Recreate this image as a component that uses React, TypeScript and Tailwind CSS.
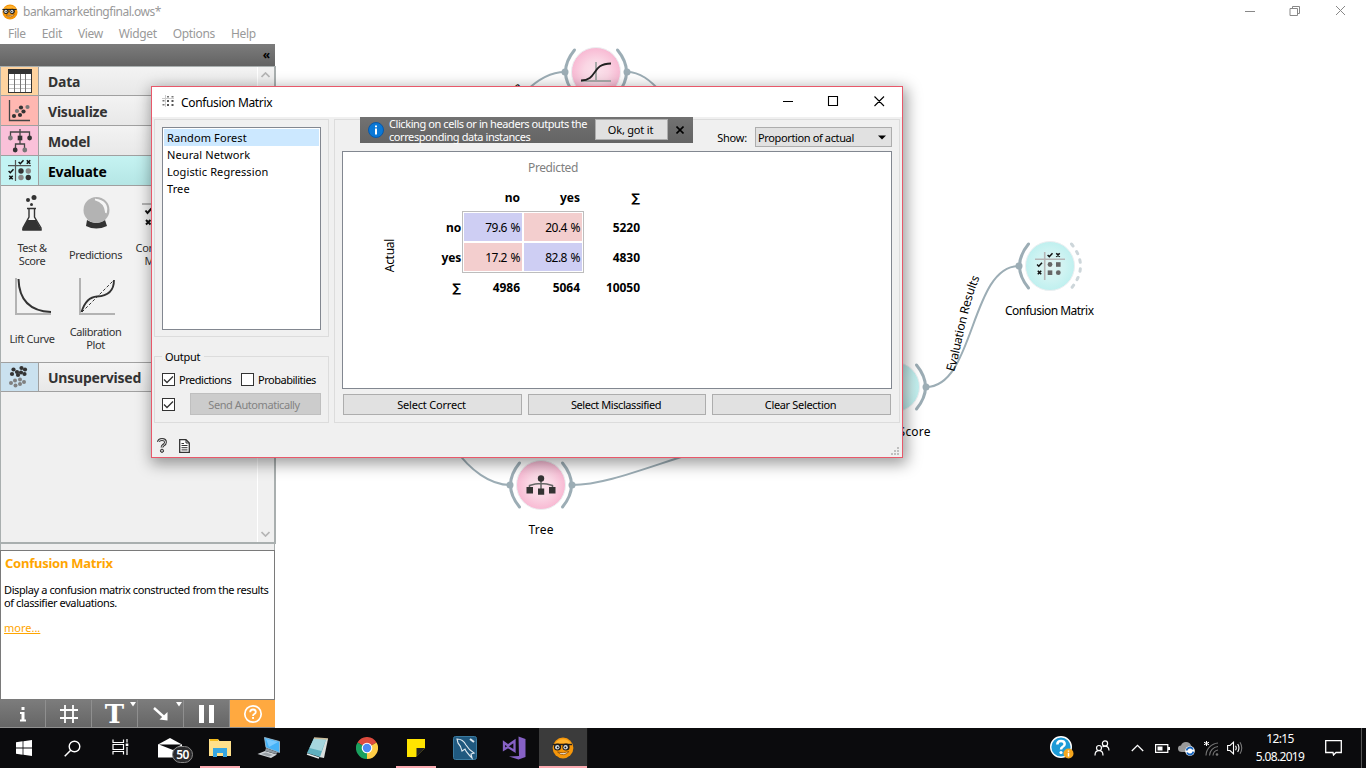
import React from "react";

const TAHOMA = "font-['Noto_Sans','DejaVu_Sans',sans-serif]";

/* ---------- shared drawings ---------- */

function Mascot({ size }: { size: number }) {
  return (
    <svg width={size} height={size} viewBox="0 0 22 22">
      <circle cx="11" cy="11" r="10.4" fill="#f5960a" />
      <path d="M2 8 A10 10 0 0 1 20 8 Q11 4 2 8" fill="#ffb22e" />
      <path d="M0.500 7.500 H20" stroke="#222" strokeWidth="1.4" />
      <circle cx="5.500" cy="10" r="3.600" fill="#1b1b1b" />
      <circle cx="14" cy="10" r="3.600" fill="#1b1b1b" />
      <circle cx="5.300" cy="10.200" r="2.200" fill="#d8dde0" />
      <circle cx="13.600" cy="10.200" r="2.200" fill="#d8dde0" />
      <circle cx="5.700" cy="10.400" r="0.900" fill="#111" />
      <circle cx="13.400" cy="10.400" r="0.900" fill="#111" />
      <path d="M5.500 15 Q11.500 20.500 17 14.500 Q11 17 5.500 15Z" fill="#fff" stroke="#8a4a00" strokeWidth="0.8" />
    </svg>
  );
}

function Tick({ x, y }: { x: number; y: number }) {
  return <path d={`M${x - 2.4} ${y} l1.7 1.7 l3.2 -3.5`} fill="none" stroke="#111" strokeWidth="1.5" />;
}
function Cross({ x, y }: { x: number; y: number }) {
  return <path d={`M${x - 1.7} ${y - 1.7} l3.4 3.4 m0 -3.4 l-3.4 3.4`} stroke="#111" strokeWidth="1.6" />;
}

/* ---------- sidebar ---------- */

function DataIcon() {
  return (
    <svg width="24" height="24" viewBox="0 0 24 24">
      <rect x="0.5" y="0.5" width="23" height="23" fill="#fff" stroke="#333" />
      <rect x="0" y="0" width="24" height="5" fill="#333" />
      <path d="M1 10.5H23M1 15.500H23M1 19.5H23" stroke="#c4c4c4" />
      <path d="M6.5 5V23M12.500 5V23M17.5 5V23" stroke="#777" />
    </svg>
  );
}
function VisualizeIcon() {
  return (
    <svg width="24" height="24" viewBox="0 0 24 24">
      <path d="M1.5 1V21.5H22" fill="none" stroke="#444" strokeWidth="1.3" />
      <g fill="#333">
        <circle cx="6" cy="17" r="2.1" /><circle cx="12" cy="16" r="2.1" /><circle cx="13" cy="8.5" r="2.1" /><circle cx="15.5" cy="12.5" r="2.1" />
      </g>
      <g fill="#777">
        <circle cx="9" cy="12" r="2.1" /><circle cx="19.5" cy="8" r="2.1" />
      </g>
    </svg>
  );
}
function ModelIcon() {
  return (
    <svg width="24" height="24" viewBox="0 0 24 24">
      <path d="M12 0V12M2.5 8V3H21.5V8M7.5 20V15H16.5V20M12 12V15" fill="none" stroke="#444" strokeWidth="1.3" />
      <rect x="9.7" y="6.7" width="4.6" height="4.6" fill="#333" />
      <circle cx="2.4" cy="9" r="2.4" fill="#777" />
      <circle cx="21.6" cy="9" r="2.4" fill="#333" />
      <circle cx="7.2" cy="21" r="2.4" fill="#333" />
      <circle cx="16.8" cy="21" r="2.4" fill="#777" />
    </svg>
  );
}
function EvaluateIcon() {
  return (
    <svg width="24" height="24" viewBox="0 0 24 24">
      <path d="M7.5 1V22M0 6.7H23" stroke="#555" strokeWidth="1.2" />
      <Tick x={13} y={3} />
      <Cross x={20.5} y={3} />
      <Tick x={3} y={12} />
      <Cross x={3} y={18.5} />
      <circle cx="13" cy="12" r="2.7" fill="#333" />
      <circle cx="20.3" cy="12" r="2.7" fill="#888" />
      <circle cx="13" cy="18.5" r="2.7" fill="#888" />
      <circle cx="20.3" cy="18.5" r="2.7" fill="#333" />
    </svg>
  );
}
function UnsupervisedIcon() {
  return (
    <svg width="24" height="24" viewBox="0 0 24 24">
      <g fill="#333">
        {[[4, 9], [5.5, 4.5], [9, 7], [13.5, 3], [13, 7.5], [17, 4.5], [16.5, 9], [10, 10]].map(([x, y]) => (
          <circle key={`${x}-${y}`} cx={x} cy={y} r="2.1" />
        ))}
      </g>
      <g fill="#808080">
        {[[3, 18], [7, 15.5], [12, 14.5], [16, 17], [7.5, 20.5], [12, 19]].map(([x, y]) => (
          <circle key={`${x}-${y}`} cx={x} cy={y} r="2" />
        ))}
      </g>
    </svg>
  );
}

function Category({ label, tile, icon, active = false, short = false }: { label: string; tile: string; icon: React.ReactNode; active?: boolean; short?: boolean }) {
  return (
    <div className={`flex ${short ? "h-[29px]" : "h-[30px]"} shrink-0 border-b border-[#a0a0a0] ${active ? "bg-linear-to-b from-[#c5f3f2] to-[#b5e6e5]" : "bg-linear-to-b from-[#f3f3f3] to-[#e8e8e8]"}`}>
      <div className={`flex w-[38px] items-center justify-center border-r border-[#a0a0a0] ${tile}`}>{icon}</div>
      <div className={`pl-[9px] text-[14px] tracking-[-0.22px] ${short ? "leading-[30px]" : "leading-[32px]"} font-bold ${active ? "text-black" : "text-[#333]"}`}>{label}</div>
    </div>
  );
}

function Tool({ icon, children }: { icon: React.ReactNode; children: React.ReactNode }) {
  return (
    <div className="flex h-[84px] flex-col items-center pt-2">
      <div className="h-10">{icon}</div>
      <div className="mt-[5px] flex h-7 items-center pt-[2px] text-center text-[11px] leading-[13px] tracking-[-0.42px] whitespace-nowrap text-[#333]">
        <div>{children}</div>
      </div>
    </div>
  );
}

function BarButton({ children, menu = false }: { children: React.ReactNode; menu?: boolean }) {
  return (
    <div className="relative flex w-[46px] items-center justify-center border-r border-[#8f8f8f] bg-linear-to-b from-[#7c7c7c] to-[#666]">
      {children}
      {menu && (
        <svg className="absolute top-[2px] right-[1px]" width="6" height="5" viewBox="0 0 6 5"><path d="M0 0H6L3 4.6Z" fill="#fff" /></svg>
      )}
    </div>
  );
}

function Sidebar() {
  return (
    <div className="flex w-[276px] shrink-0 flex-col">
      <div className="flex h-[22px] w-[275px] items-center justify-end bg-linear-to-b from-[#7c7c7c] to-[#636363] pr-[5px] text-[12px] leading-none font-bold text-black">
        «
      </div>
      <div className="flex h-[478px] w-[276px] border-t border-r-2 border-b-2 border-l border-[#a9afaf] bg-[#f0f0f0]">
        <div className="flex w-[256px] flex-col">
          <Category label="Data" tile="bg-[#ffd39f]" icon={<DataIcon />} short />
          <Category label="Visualize" tile="bg-[#ffb7b1]" icon={<VisualizeIcon />} />
          <Category label="Model" tile="bg-[#fac1d9]" icon={<ModelIcon />} />
          <Category label="Evaluate" tile="bg-[#c3f3f3]" icon={<EvaluateIcon />} active />
          <div className="grid h-[177px] shrink-0 grid-cols-[62px_65px_64px_64px] content-start overflow-hidden border-b border-[#a0a0a0] bg-[#f2f2f2]">
            <Tool
              icon={
                <svg width="36" height="38" viewBox="0 0 36 38">
                  <circle cx="20" cy="3.5" r="2.5" fill="#333" /><circle cx="14" cy="6" r="2" fill="#333" /><circle cx="17.5" cy="10.5" r="1.5" fill="#333" />
                  <path d="M13 14.5H22M15 15V23L9 34V36H27V34L20.5 23V15" fill="none" stroke="#333" strokeWidth="1.4" />
                  <path d="M13.5 26H22L27.5 36H8Z" fill="#333" />
                </svg>
              }
            >
              Test &amp;<br />Score
            </Tool>
            <Tool
              icon={
                <svg width="36" height="38" viewBox="0 0 36 38">
                  <path d="M9 26Q18 32 27 26L29 32Q18 37 8 32Z" fill="#333" />
                  <circle cx="18.500" cy="16" r="13" fill="#b3b3b3" />
                  <path d="M17 5.5Q27 8 28 19Q31 7 17 5.5Z" fill="#f5f5f5" stroke="#f5f5f5" strokeWidth="1.4" />
                </svg>
              }
            >
              Predictions
            </Tool>
            <Tool
              icon={
                <svg width="36" height="38" viewBox="0 0 36 38">
                  <path d="M0 10H36" stroke="#b3b3b3" strokeWidth="2" />
                  <path d="M3.5 16.5l2 2.5 4-4.5M4 26l4.5 4.5m0-4.5l-4.5 4.5" fill="none" stroke="#111" strokeWidth="2" />
                </svg>
              }
            >
              Confusion<br />Matrix
            </Tool>
            <div />
            <Tool
              icon={
                <svg width="38" height="38" viewBox="0 0 38 38">
                  <path d="M3 0V36H38" fill="none" stroke="#b3b3b3" strokeWidth="2" />
                  <path d="M5.500 1C6 20 15 33 38 34" fill="none" stroke="#333" strokeWidth="2" />
                </svg>
              }
            >
              Lift Curve
            </Tool>
            <Tool
              icon={
                <svg width="38" height="38" viewBox="0 0 38 38">
                  <path d="M3 0V36H38" fill="none" stroke="#b3b3b3" strokeWidth="2" />
                  <path d="M5 34L37 2" stroke="#333" strokeWidth="1" strokeDasharray="3 2" />
                  <path d="M4.500 34C7 26 11 19 20 18.500C30 18 37 13 37 2" fill="none" stroke="#333" strokeWidth="1.8" />
                </svg>
              }
            >
              Calibration<br />Plot
            </Tool>
          </div>
          <Category label="Unsupervised" tile="bg-[#cae1ef]" icon={<UnsupervisedIcon />} short />
        </div>
        <div className="flex w-[17px] flex-col justify-between border-l border-white py-[5px] pl-[3px]">
          <svg width="9" height="6" viewBox="0 0 9 6"><path d="M0.5 5L4.5 1L8.5 5" fill="none" stroke="#b5b5b5" strokeWidth="1.7" /></svg>
          <svg width="9" height="6" viewBox="0 0 9 6"><path d="M0.5 1L4.5 5L8.5 1" fill="none" stroke="#b5b5b5" strokeWidth="1.7" /></svg>
        </div>
      </div>
      <div className="h-[6px] w-[275px] border-r border-l border-[#a9afaf] bg-[#f0f0f0]" />
      <div className="h-[150px] w-[275px] border border-[#7a7a7a] bg-white pl-[3px]">
        <div className="mt-[3px] pl-px text-[13px] leading-[18px] font-bold tracking-[-0.25px] text-[#ffa500]">Confusion Matrix</div>
        <div className="mt-[11px] text-[11px] leading-[13px] tracking-[-0.4px] whitespace-nowrap text-black">
          Display a confusion matrix constructed from the results
          <br />
          of classifier evaluations.
        </div>
        <div className="mt-[12px] text-[11px] leading-[13px] text-[#ffa500] underline">more...</div>
      </div>
      <div className="flex h-[28px] w-[275px] border-b border-[#8f8f8f]">
        <BarButton>
          <svg width="8" height="16" viewBox="0 0 8 16"><path d="M1 6H5.5V13.5H7V15.5H1V13.5H2.5V8H1ZM2.5 1H5.5V4H2.5Z" fill="#fff" /></svg>
        </BarButton>
        <BarButton>
          <svg width="20" height="20" viewBox="0 0 20 20"><path d="M6 1V19M14 1V19M1 6H19M1 14H19" stroke="#fff" strokeWidth="1.8" /></svg>
        </BarButton>
        <BarButton menu>
          <span className="font-['DejaVu_Serif',serif] text-[26px] leading-none font-bold text-white">T</span>
        </BarButton>
        <BarButton menu>
          <svg width="16" height="16" viewBox="0 0 16 16"><path d="M1 2L10.5 10.5" stroke="#fff" strokeWidth="2.4" /><path d="M14.500 14.500V6L6.500 13.500Z" fill="#fff" /></svg>
        </BarButton>
        <BarButton>
          <svg width="16" height="18" viewBox="0 0 16 18"><path d="M0 0H5V18H0ZM10 0H15V18H10Z" fill="#fff" /></svg>
        </BarButton>
        <div className="flex flex-1 items-center justify-center bg-[#ffa940]">
          <svg width="20" height="20" viewBox="0 0 20 20">
            <circle cx="10" cy="10" r="8.2" fill="none" stroke="#fff" strokeWidth="1.7" />
            <path d="M7.200 8.200Q7.200 5.500 10 5.500Q12.800 5.500 12.800 8Q12.800 9.300 11 10.200Q10 10.800 10 12" fill="none" stroke="#fff" strokeWidth="1.8" />
            <rect x="9.100" y="13" width="1.900" height="1.900" fill="#fff" />
          </svg>
        </div>
      </div>
    </div>
  );
}

/* ---------- workflow canvas ---------- */

function Workflow() {
  const line = "#9cadb5";
  return (
    <svg width="1090" height="684" viewBox="276 44 1090 684">
      <defs>
        <radialGradient id="pink"><stop offset="0" stopColor="#fbe3ec" /><stop offset="0.5" stopColor="#fad6e4" /><stop offset="1" stopColor="#f8b9d3" /></radialGradient>
        <radialGradient id="aqua"><stop offset="0" stopColor="#e3f3f2" /><stop offset="0.6" stopColor="#cff3f2" /><stop offset="1" stopColor="#bff0ef" /></radialGradient>
        <path id="channel" d="M954 372C963 345 966 305 983 270" />
      </defs>
      <g fill="none" stroke={line} strokeWidth="2">
        <path d="M926 387C975 387 970 266 1019 266" />
        <path d="M572 485C605 485 645 468 700 451" />
        <path d="M455 449C470 470 490 485 510 485" />
        <path d="M525 92C538 79 551 72 565 72" />
        <path d="M627 72C640 72 650 80 661 92" />
      </g>
      <g fill="none" stroke={line} strokeWidth="3" strokeLinecap="round">
        <path d="M519.500 463Q501.500 485 519.500 507" />
        <path d="M562.500 463Q580.500 485 562.500 507" />
        <path d="M574.500 50Q556.500 72 574.500 94" />
        <path d="M617.500 50Q635.500 72 617.500 94" />
        <path d="M1028.500 244Q1010.500 266 1028.500 288" />
        <path d="M916.500 365Q934.500 387 916.500 409" />
        <path d="M1071.500 244Q1089.500 266 1071.500 288" stroke="#cdd6da" strokeDasharray="2.500 6.500" />
      </g>
      <g fill={line}>
        {[[510, 485], [572, 485], [565, 72], [627, 72], [1019, 266], [926, 387]].map(([x, y]) => (
          <circle key={`${x}-${y}`} cx={x} cy={y} r="3.500" />
        ))}
      </g>
      <g stroke="#eceff1" strokeWidth="1">
        <circle cx="541" cy="485" r="24.500" fill="url(#pink)" />
        <circle cx="596" cy="72" r="24.500" fill="url(#pink)" />
        <circle cx="1050" cy="266" r="24.500" fill="url(#aqua)" />
        <circle cx="895" cy="387" r="24.500" fill="url(#aqua)" />
      </g>
      {/* tree glyph */}
      <path d="M541 479V489M529.500 489V485.500Q541 481.500 552.500 485.500V489" fill="none" stroke="#666" strokeWidth="1.500" />
      <circle cx="541" cy="478.500" r="3.200" fill="#333" />
      <path d="M526.500 487h6.500v6.500h-6.500zM538 488.500h6.200v6.200h-6.200zM549 487h6.500v6.500h-6.500z" fill="#333" />
      {/* logistic glyph */}
      <path d="M596 62V82M581 81H611" stroke="#aaa" strokeWidth="2" />
      <path d="M581 80.500C598 80.500 591 63.500 611 63.500" fill="none" stroke="#222" strokeWidth="1.800" />
      {/* confusion matrix glyph */}
      <path d="M1044.700 252V280M1035 259.200H1065" stroke="#b5b5b5" strokeWidth="1.600" />
      <Tick x={1050} y={255} />
      <Cross x={1058} y={255} />
      <Tick x={1039.500} y={264.500} />
      <Cross x={1039.500} y={272.500} />
      <g fill="#666">
        <circle cx="1050" cy="264.500" r="2.400" /><rect x="1056" y="262.200" width="4.600" height="4.600" />
        <rect x="1047.700" y="270.400" width="4.600" height="4.600" /><circle cx="1058.300" cy="272.700" r="2.400" />
      </g>
      <g fontSize="12" fill="#000" textAnchor="middle" className={TAHOMA}>
        <text x="1049.500" y="315" textLength="89">Confusion Matrix</text>
        <text x="895" y="436" textLength="71">Test &amp; Score</text>
        <text x="541" y="534" textLength="25">Tree</text>
      </g>
      <text fontSize="12" className={TAHOMA}><textPath href="#channel" textLength="98">Evaluation Results</textPath></text>
      <text fontSize="12" className={TAHOMA} transform="rotate(-38 517 90)" x="516" y="92">a</text>
      <path d="M276 43.500H1366" stroke="#ededed" />
    </svg>
  );
}

/* ---------- confusion matrix dialog ---------- */

function CheckBox({ checked = false }: { checked?: boolean }) {
  return (
    <span className="flex size-[13px] shrink-0 items-center justify-center border border-[#333] bg-white">
      {checked && (
        <svg width="11" height="11" viewBox="0 0 11 11"><path d="M1 5.500L4 8.500L10 2.500" fill="none" stroke="#333" strokeWidth="1.300" /></svg>
      )}
    </span>
  );
}

function PushButton({ children, className = "" }: { children: React.ReactNode; className?: string }) {
  return <div className={`flex h-[21px] items-center justify-center border border-[#adadad] bg-[#e1e1e1] pt-[2px] ${className}`}>{children}</div>;
}

const head = "pr-[3px] text-right font-bold leading-[29px]";
const total = "pr-[3px] text-right font-bold leading-[31px] tracking-[-0.05px]";
const rowHead = "pr-[2px] text-right font-bold leading-[31px] tracking-[-0.2px]";
const cell = "m-px h-[28px] pr-[2px] text-right leading-[29px] tracking-[-0.52px] [word-spacing:1px]";

function Dialog() {
  return (
    <div className="absolute top-[86px] left-[151px] flex h-[372px] w-[752px] flex-col border border-[#e8586a] bg-[#f0f0f0] text-[11px] text-black shadow-[2px_4px_14px_2px_rgba(0,0,0,0.38)]">
      <div className="flex h-[30px] items-center bg-white pl-[10px]">
        <svg className="-mt-[3px]" width="12" height="12" viewBox="0 0 12 12">
          <path d="M0 3.500H12M3.500 0V12" stroke="#ccc" />
          <path d="M5 1h2v1.500H5zM9.500 1h2v1.500h-2zM0.500 5h2v1.500h-2zM0.500 9h2v1.500h-2z" fill="#777" />
          <path d="M5 5h2v2H5zM9.500 5h2v2h-2zM5 9h2v2H5zM9.500 9h2v2h-2z" fill="#555" />
        </svg>
        <span className="ml-[7px] pt-px text-[12px] tracking-[-0.35px]">Confusion Matrix</span>
        <svg className="mr-[17px] ml-auto" width="102" height="12" viewBox="0 0 102 12">
          <path d="M0 5.500H10M45.500 0.500H54.500V9.500H45.500ZM91.500 0.500L101 10M101 0.500L91.500 10" fill="none" stroke="#000" strokeWidth="1.100" />
        </svg>
      </div>

      <div className="flex px-[2px] pt-[2px]">
        <div className="flex w-[175px] flex-col">
          <div className="h-[218px] border border-[#dcdcdc] p-[7px]">
            <div className="h-[203px] border border-[#828790] bg-white p-px leading-[17px] tracking-[0.1px]">
              <div className="bg-[#cce8ff] pl-[3px]">Random Forest</div>
              <div className="pl-[3px]">Neural Network</div>
              <div className="pl-[3px]">Logistic Regression</div>
              <div className="pl-[3px]">Tree</div>
            </div>
          </div>
          <div className="relative mt-[19px] h-[67px] border border-[#dcdcdc] px-[7px] pt-[16px]">
            <span className="absolute -top-[8px] left-[7px] bg-[#f0f0f0] pr-[4px] pl-[3px] leading-[16px] tracking-[-0.3px]">Output</span>
            <div className="flex h-[13px] items-center tracking-[-0.48px]">
              <CheckBox checked />
              <span className="ml-[4px] w-[62px] pt-[2px] whitespace-nowrap">Predictions</span>
              <CheckBox />
              <span className="ml-[4px] pt-[2px] whitespace-nowrap">Probabilities</span>
            </div>
            <div className="mt-[7px] flex items-center">
              <CheckBox checked />
              <div className="ml-[15px] flex h-[22px] w-[131px] items-center justify-center border border-[#bfbfbf] bg-[#ccc] pt-[2px] pr-[3px] tracking-[-0.43px] text-[#838383]">Send Automatically</div>
            </div>
          </div>
        </div>

        <div className="relative ml-[5px] h-[304px] w-[566px] border border-[#dcdcdc] px-[7px] pt-[7px]">
          <div className="flex h-[20px] items-center justify-end">
            <span className="mr-[8px] pt-[2px] tracking-[-0.2px]">Show:</span>
            <div className="flex h-[20px] w-[137px] items-center border border-[#adadad] bg-[#e1e1e1] pt-[2px] pl-[2px] tracking-[-0.37px]">
              Proportion of actual
              <svg className="mr-[5px] mb-[2px] ml-auto" width="8" height="5" viewBox="0 0 8 5"><path d="M0 0.500H8L4 4.500Z" fill="#000" /></svg>
            </div>
          </div>
          <div className="mt-[4px] flex h-[238px] border border-[#828790] bg-white text-[12px]">
            <div className="flex w-[60px] items-center justify-end pb-[28px]">
              <span className="rotate-180 pl-[5px] leading-[16px] tracking-[-0.3px] [writing-mode:vertical-rl]">Actual</span>
            </div>
            <div>
              <div className="flex h-[31px] items-center pt-px pl-[60px]">
                <div className="w-[180px] text-center tracking-[-0.4px] text-[#808080]">Predicted</div>
              </div>
              <div className="relative grid grid-cols-[60px_60px_60px_60px] grid-rows-[29px_30px_30px_30px]">
                <div className="absolute top-[28px] left-[59px] h-[62px] w-[122px] border border-[#bdbdbd]" />
                <div /><div className={head}>no</div><div className={head}>yes</div><div className={head}>∑</div>
                <div className={rowHead}>no</div>
                <div className={`bg-[#cecef3] ${cell}`}>79.6 %</div>
                <div className={`bg-[#f3cece] ${cell}`}>20.4 %</div>
                <div className={total}>5220</div>
                <div className={rowHead}>yes</div>
                <div className={`bg-[#f3cece] ${cell}`}>17.2 %</div>
                <div className={`bg-[#cecef3] ${cell}`}>82.8 %</div>
                <div className={total}>4830</div>
                <div className={rowHead}>∑</div><div className={total}>4986</div><div className={total}>5064</div><div className={total}>10050</div>
              </div>
            </div>
          </div>
          <div className="mt-[5px] flex gap-[6px] pr-px pl-px">
            <PushButton className="w-[179px] pr-[2px] tracking-[-0.2px]">Select Correct</PushButton>
            <PushButton className="w-[178px] pr-[2px] tracking-[-0.43px]">Select Misclassified</PushButton>
            <PushButton className="w-[179px] pr-[2px] tracking-[-0.33px]">Clear Selection</PushButton>
          </div>
          <div className="absolute -top-[3px] left-[25px] flex h-[26px] w-[333px] items-center bg-linear-to-b from-[#727272] to-[#646464] pl-[8px] text-white">
            <svg width="16" height="16" viewBox="0 0 16 16">
              <circle cx="8" cy="8" r="7.500" fill="#0a78d6" stroke="#0a58a8" />
              <path d="M7 3.500H9V5.300H7ZM7 6.500H9V12.500H7Z" fill="#fff" />
            </svg>
            <div className="ml-[5px] w-[206px] leading-[13px] tracking-[-0.42px] whitespace-nowrap">Clicking on cells or in headers outputs the<br />corresponding data instances</div>
            <PushButton className="mb-px w-[73px] pr-[2px] tracking-[-0.2px] text-black">Ok, got it</PushButton>
            <svg className="ml-[8px]" width="8" height="8" viewBox="0 0 8 8"><path d="M0.500 0.500L7.500 7.500M7.500 0.500L0.500 7.500" stroke="#000" strokeWidth="1.600" /></svg>
          </div>
        </div>
      </div>

      <div className="mt-auto flex h-[34px] items-center pt-[13px] pb-[2px] pl-[5px]">
        <svg width="10" height="15" viewBox="0 0 10 15">
          <path d="M1.500 4Q1.500 1.500 5 1.500Q8.500 1.500 8.500 4.200Q8.500 6 6.500 7Q5 8 5 9.500" fill="none" stroke="#333" strokeWidth="2.800" />
          <path d="M1.500 4Q1.500 1.500 5 1.500Q8.500 1.500 8.500 4.200Q8.500 6 6.500 7Q5 8 5 9.500" fill="none" stroke="#eee" strokeWidth="1" />
          <circle cx="5" cy="12.800" r="1.600" fill="#bbb" stroke="#333" />
        </svg>
        <svg className="ml-[12px]" width="11" height="14" viewBox="0 0 11 14">
          <path d="M0.700 0.700H7L10.300 4V13.300H0.700Z" fill="#fff" stroke="#333" strokeWidth="1.300" />
          <path d="M7 1V4H10M2.500 4.500H5M2.500 6.500H8.500M2.500 8.700H8.500M2.500 10.900H8.500" fill="none" stroke="#333" />
        </svg>
        <svg className="mt-[10px] mr-[3px] ml-auto" width="8" height="8" viewBox="0 0 8 8">
          <path d="M6 0h2v2h-2zM3 3h2v2h-2zM6 3h2v2h-2zM0 6h2v2h-2zM3 6h2v2h-2zM6 6h2v2h-2z" fill="#bfbfbf" />
        </svg>
      </div>
    </div>
  );
}

/* ---------- taskbar ---------- */

function Slot({ children, running = false, active = false }: { children: React.ReactNode; running?: boolean; active?: boolean }) {
  return (
    <div className={`flex w-[49px] flex-col items-center ${active ? "ml-px border-r border-[#111] bg-[#3b3b3b]" : ""}`}>
      <div className="flex h-[38px] items-center pt-[2px]">{children}</div>
      {running && <div className={`h-[2px] bg-[#fbaab0] ${active ? "w-full" : "w-10"}`} />}
    </div>
  );
}

function Taskbar() {
  return (
    <div className="flex h-10 bg-[#0b0b0d] text-white">
      <div className="flex w-12 items-center justify-center">
        <svg width="16" height="16" viewBox="0 0 16 16"><path d="M0 2.200L6.600 1.300V7.600H0ZM7.400 1.200L16 0V7.600H7.400ZM0 8.400H6.600V14.700L0 13.800ZM7.400 8.400H16V16L7.400 14.800Z" fill="#fff" /></svg>
      </div>
      <div className="flex w-12 items-center justify-center">
        <svg width="17" height="17" viewBox="0 0 17 17"><circle cx="10.500" cy="6.500" r="5.300" fill="none" stroke="#fff" strokeWidth="1.400" /><path d="M6.700 10.300L0.700 16.300" stroke="#fff" strokeWidth="1.500" /></svg>
      </div>
      <div className="flex w-[50px] items-center justify-center pr-[2px] pb-[2px]">
        <svg width="17" height="16" viewBox="0 0 17 16">
          <path d="M1 0.500V3.500H11.500V0.500M1 15.500V12.500H11.500V15.500M1 5.500H11.500V10.500H1ZM15 0V3.500M15 8V16" fill="none" stroke="#fff" strokeWidth="1.200" />
          <rect x="13.700" y="4.500" width="2.600" height="2.600" fill="#fff" />
        </svg>
      </div>
      <Slot>
        <div className="relative">
          <svg width="25" height="20" viewBox="0 0 25 20"><path d="M0 6.500L12 0L24 6.500V19.500H0Z" fill="#fff" /><path d="M1 6.500H23.500L15 12Z" fill="#0b0b0d" /></svg>
          <span className="absolute top-[8px] left-[14px] flex h-[17px] w-[21px] items-center justify-center rounded-full border border-[#888] bg-[#2b2b2d] text-[12px] leading-none font-semibold tracking-[-0.5px]">50</span>
        </div>
      </Slot>
      <Slot running>
        <svg width="22" height="20" viewBox="0 0 22 20">
          <path d="M0 1H9L10.500 3H22V18H0Z" fill="#ffe08a" /><path d="M1 1H9V3H1Z" fill="#f3bb1c" />
          <path d="M4 10H18V19H14V15H8V19H4Z" fill="#37a7e2" />
        </svg>
      </Slot>
      <Slot>
        <svg width="24" height="22" viewBox="0 0 24 22">
          <path d="M7.500 0.500L22.500 4.500V15.500L9 10.500Z" fill="#45b2f7" stroke="#a9cbe0" strokeWidth="0.800" /><path d="M9 2L21 5L12 10Z" fill="#78caff" />
          <path d="M0.500 17L8 14L20 17.500L14 21Z" fill="#cfd4d8" /><path d="M9 11L21 15.500L19 17L8 14Z" fill="#8e979e" />
          <path d="M4 17L9 15.500L16 18L12 19.500Z" fill="#9aa1a6" />
        </svg>
      </Slot>
      <Slot>
        <svg width="24" height="22" viewBox="0 0 24 22">
          <path d="M8 1L22 2L18 21L13 20Z" fill="#d9dfdd" /><path d="M8 1L20 2.500L14 20L1 16Z" fill="#5fb0bf" /><path d="M8 1L20 2.500L15.500 14L3.500 11Z" fill="#a6d6de" />
          <path d="M8 1L22 2" stroke="#cbbd9c" strokeWidth="1.500" /><path d="M1 17L13 21" stroke="#e8eeee" strokeWidth="1.500" />
        </svg>
      </Slot>
      <Slot>
        <svg width="22" height="22" viewBox="0 0 22 22">
          <path d="M11 11L1.470 5.500A11 11 0 0 1 20.530 5.500Z" fill="#dd4b3e" />
          <path d="M11 11L20.530 5.500A11 11 0 0 1 11 22Z" fill="#ffcd46" />
          <path d="M11 11L11 22A11 11 0 0 1 1.470 5.500Z" fill="#1aa15f" />
          <circle cx="11" cy="11" r="5.300" fill="#fff" /><circle cx="11" cy="11" r="4.200" fill="#4a8af4" />
        </svg>
      </Slot>
      <Slot running>
        <svg width="18" height="18" viewBox="0 0 18 18"><path d="M0 0H18V9L9 18H0Z" fill="#ffe400" /><path d="M9.500 18V9H18Z" fill="#222" /></svg>
      </Slot>
      <Slot>
        <svg width="24" height="24" viewBox="0 0 24 24">
          <rect x="0.500" y="0.500" width="23" height="23" rx="2" fill="#20597f" stroke="#3b7ba0" />
          <path d="M4 3Q10 3 13 9Q16 14 21 17L18 18L19 22Q13 16 12 13L9 15Q8 10 5 7Z" fill="none" stroke="#dfe9f0" strokeWidth="1.100" />
          <path d="M17 3L21 6" stroke="#dfe9f0" strokeWidth="2" />
        </svg>
      </Slot>
      <Slot>
        <svg width="24" height="24" viewBox="0 0 24 24">
          <path d="M16.500 0.500L23.500 3V21L16.500 23.500L7 20.500L17 20Z" fill="#8661c5" />
          <path d="M2 6.500V13.500L6 11L12.500 15V5L6 9.500Z" fill="none" stroke="#8661c5" strokeWidth="2.300" />
        </svg>
      </Slot>
      <Slot running active><Mascot size={22} /></Slot>

      <div className="ml-auto flex items-center">
        <svg width="24" height="24" viewBox="0 0 24 24">
          <circle cx="11" cy="11" r="10.300" fill="#1c9ad6" stroke="#fff" strokeWidth="1.400" />
          <path d="M7.300 8.500Q7.300 5 11 5Q14.700 5 14.700 8Q14.700 9.800 12.500 11Q11 12 11 13.500" fill="none" stroke="#fff" strokeWidth="2.500" />
          <circle cx="11" cy="16.500" r="1.600" fill="#fff" />
          <circle cx="18.500" cy="17.500" r="5" fill="#f5a61d" /><path d="M18.500 14.500V15.800M18.500 16.800V20.500" stroke="#fff" strokeWidth="1.500" />
        </svg>
        <svg className="ml-[20px]" width="16" height="16" viewBox="0 0 16 16">
          <circle cx="11" cy="3.500" r="2.600" fill="none" stroke="#fff" strokeWidth="1.200" /><circle cx="5" cy="8" r="2.500" fill="none" stroke="#fff" strokeWidth="1.200" />
          <path d="M1 15.500Q1 10.700 5 10.700Q9 10.700 9 15.500M8.500 7.200Q9.500 6.200 11 6.200Q14.800 6.200 15 10.500" fill="none" stroke="#fff" strokeWidth="1.200" />
        </svg>
        <svg className="ml-[21px]" width="13" height="8" viewBox="0 0 13 8"><path d="M0.800 7L6.500 1.300L12.200 7" fill="none" stroke="#fff" strokeWidth="1.300" /></svg>
        <svg className="ml-[11px]" width="15" height="9" viewBox="0 0 15 9"><path d="M0.600 0.600H12.800V8.400H0.600Z" fill="none" stroke="#fff" strokeWidth="1.200" /><path d="M2.500 2.500H7.500V6.500H2.500ZM13 3H15V6H13Z" fill="#fff" /></svg>
        <svg className="ml-[8px]" width="18" height="15" viewBox="0 0 18 15">
          <path d="M4 11Q0 11 0 7.500Q0 4.500 3 4.500Q4 1 8 1Q12 1 13 4.500Q15 5 15 8L9 11Z" fill="#999" />
          <circle cx="12" cy="10" r="4.800" fill="#fff" /><path d="M8.700 9.500A3.300 3.300 0 0 1 15 8.500M15.300 10.700A3.300 3.300 0 0 1 9 11.500" fill="none" stroke="#1565c0" strokeWidth="1.800" />
        </svg>
        <svg className="ml-[7px]" width="17" height="16" viewBox="0 0 17 16">
          <path d="M3.500 1V6M1 2.200L6 4.800M6 2.200L1 4.800" stroke="#fff" />
          <path d="M3 15.500A13 13 0 0 1 15 3M6.500 15.500A9.500 9.500 0 0 1 15 6.500M10 15.500A6 6 0 0 1 15 10" fill="none" stroke="#777" strokeWidth="1.100" />
          <circle cx="14" cy="14.500" r="1.300" fill="#777" />
        </svg>
        <svg className="ml-[7px]" width="17" height="14" viewBox="0 0 17 14">
          <path d="M0.600 4.500H3L6.500 1.200V12.800L3 9.500H0.600ZM8.500 4.800Q10 7 8.500 9.200M10.700 3Q13.200 7 10.700 11" fill="none" stroke="#fff" strokeWidth="1.100" />
          <path d="M13 1.200Q16.500 7 13 12.800" fill="none" stroke="#777" strokeWidth="1.100" />
        </svg>
        <div className="ml-[11px] w-[50px] pb-px text-center text-[12px] leading-[18px] tracking-[-0.65px] whitespace-nowrap">12:15<br />5.08.2019</div>
        <svg className="ml-[20px]" width="17" height="16" viewBox="0 0 17 16"><path d="M0.700 0.700H16.300V12.500H11L8.500 15L8 12.500H0.700Z" fill="none" stroke="#fff" strokeWidth="1.300" /></svg>
        <div className="ml-[19px] h-10 w-px bg-[#555]" />
        <div className="w-[4px]" />
      </div>
    </div>
  );
}

export default function App() {
  return (
    <div className={`relative flex h-[768px] w-[1366px] flex-col overflow-hidden bg-white ${TAHOMA}`}>
      <div className="flex h-[23px] items-center pl-[2px] text-[12px] text-[#999]">
        <Mascot size={16} />
        <span className="ml-[5px] tracking-[-0.48px]">bankamarketingfinal.ows*</span>
        <svg className="mr-[20px] mb-[2px] ml-auto" width="101" height="12" viewBox="0 0 101 12">
          <path d="M0 6.500H10M47.500 3V1.500H54.500V8.500H53M45 3.500H52.500V10.500H45ZM91 1L100 10M100 1L91 10" fill="none" stroke="#888" />
        </svg>
      </div>
      <div className="flex h-[21px] items-center gap-[16px] pl-[8px] text-[12px] tracking-[-0.35px] text-[#999]">
        <span>File</span><span>Edit</span><span>View</span><span>Widget</span><span>Options</span><span>Help</span>
      </div>
      <div className="flex h-[684px]">
        <Sidebar />
        <Workflow />
      </div>
      <Taskbar />
      <Dialog />
    </div>
  );
}
